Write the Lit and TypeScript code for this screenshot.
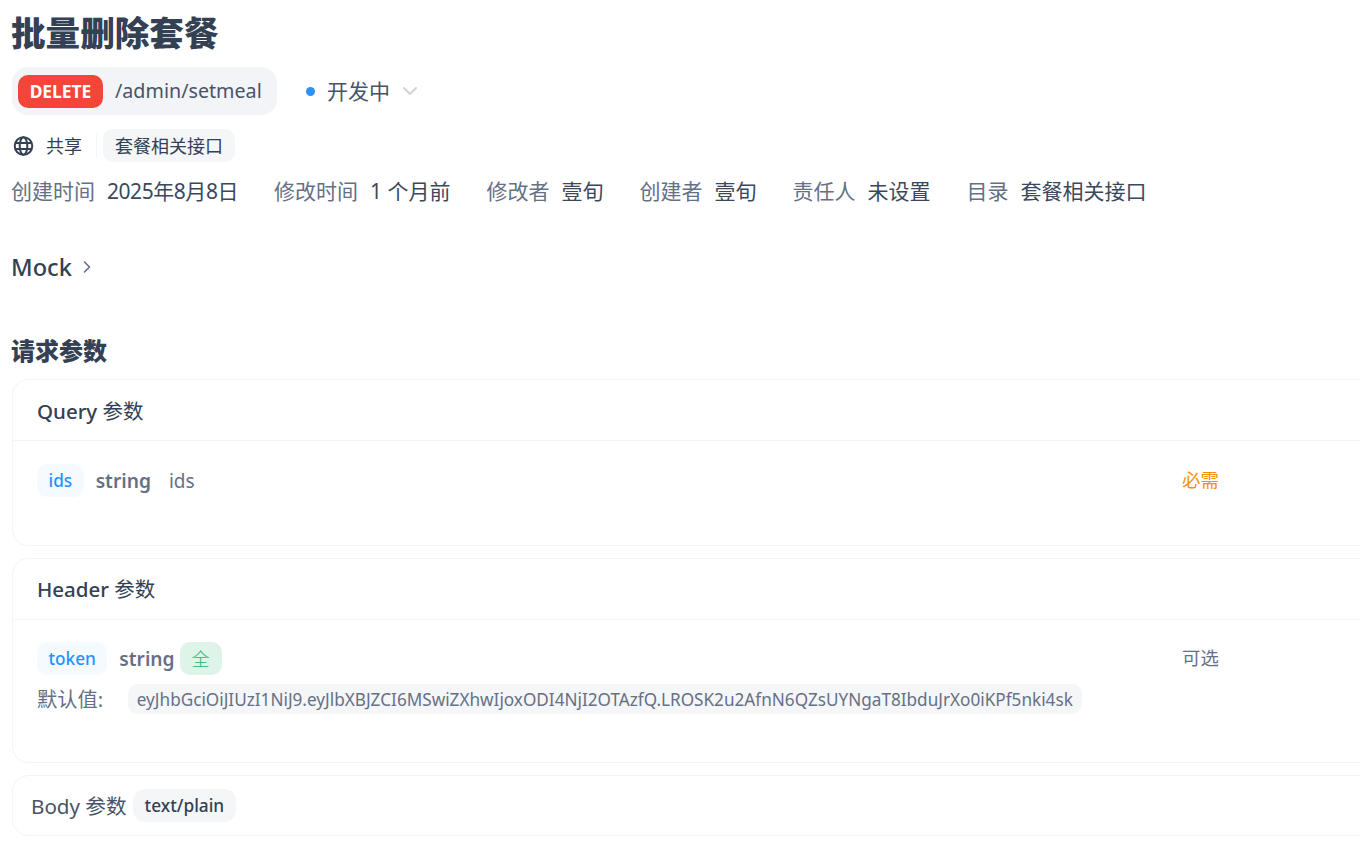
import { LitElement, html, css } from "lit";
import { customElement } from "lit/decorators.js";

@customElement("app-root")
export class AppRoot extends LitElement {
  static styles = css`
    :host {
      display: block;
      width: 1360px;
      height: 855px;
      overflow: hidden;
      background: #fff;
      color: #344054;
      font-family: "Noto Sans", "Noto Sans CJK SC", sans-serif;
      font-size: 20px;
      box-sizing: border-box;
      padding-left: 12px;
    }
    * { box-sizing: border-box; }
    .title { height: 67px; margin: 0 0 0 -1px; padding-top: 10px; font-size: 34.6px; line-height: 46px; font-weight: 800; color: #344054; white-space: nowrap; }
    .method-row { display: flex; align-items: center; height: 48px; }
    .pill { display: flex; align-items: center; height: 48px; width: 265px; padding-left: 6px; border-radius: 16px; background: #f2f4f8; }
    .badge { display: flex; align-items: center; justify-content: center; width: 85px; height: 33px; border-radius: 10px; background: #f44539; color: #fff; font-size: 17.4px; font-weight: 700; }
    .path { margin-left: 12px; font-size: 19.7px; line-height: 30px; color: #475467; white-space: nowrap; }
    .status { display: flex; align-items: center; margin-left: 29px; font-size: 21px; line-height: 30px; color: #475467; }
    .dot { width: 9px; height: 9px; border-radius: 50%; background: #2e90fa; margin-right: 12px; }
    .chev { margin-left: 12px; }
    .share-row { display: flex; align-items: center; height: 33px; margin-top: 14px; font-size: 18px; line-height: 26px; color: #344054; }
    .share-row svg { margin-left: 1px; }
    .share-label { margin-left: 12px; }
    .sep { width: 1px; height: 24px; background: #f2f4f7; margin: 0 6px 0 14px; }
    .tag { display: flex; align-items: center; height: 33px; padding: 0 12px; border-radius: 10px; background: #f5f6f8; }
    .meta { display: flex; align-items: center; height: 30px; margin: 14px 0 0 -1px; font-size: 21px; line-height: 30px; white-space: nowrap; }
    .meta-label { color: #667085; margin-right: 12px; }
    .meta-value { color: #3b485c; margin-right: 36px; }
    .date { letter-spacing: -0.45px; }
    .mock { display: flex; align-items: center; height: 32px; margin: 45px 0 0 -1px; font-size: 23.6px; line-height: 32px; font-weight: 500; }
    .mock svg { margin-left: 10px; }
    .section { height: 34px; margin: 51px 0 0 -1px; font-size: 24px; line-height: 34px; font-weight: 800; }
    .card { width: 1400px; border: 1px solid #f2f4f7; border-radius: 16px; background: #fff; }
    .c1 { height: 167px; margin-top: 11px; }
    .c1 .c-head { padding-top: 1px; }
    .c2 { height: 205px; margin-top: 12px; }
    .c2 .row { margin-top: 22px; }
    .c3 { height: 61px; margin-top: 12px; display: flex; align-items: center; padding-left: 18px; font-size: 20.6px; line-height: 30px; color: #475467; }
    .c-head { display: flex; align-items: center; height: 61px; padding-left: 24px; font-size: 20.5px; line-height: 30px; font-weight: 500; border-bottom: 1px solid #f2f4f7; white-space: pre; }
    .c-head span { font-weight: 400; }
    .row { position: relative; display: flex; align-items: center; height: 33px; margin-top: 23px; padding-left: 24px; line-height: 30px; }
    .name { display: flex; align-items: center; height: 33px; padding: 0 11.5px; border-radius: 10px; background: #f5faff; color: #1f93ff; font-size: 17.2px; font-weight: 500; }
    .type { margin-left: 12px; font-size: 19.2px; font-weight: 600; color: #667085; }
    .desc { margin-left: 18px; font-size: 19px; color: #667085; }
    .req, .opt { position: absolute; left: 1169px; margin-top: -2px; font-size: 18.4px; font-weight: 400; }
    .req { color: #f79009; }
    .opt { color: #667085; }
    .all { display: flex; align-items: center; justify-content: center; width: 42px; height: 33px; margin-left: 5px; border-radius: 10px; background: #def4e8; color: #1fb46c; font-size: 18px; font-weight: 300; }
    .defaults { display: flex; align-items: center; height: 30px; margin-top: 9px; padding-left: 24px; color: #667085; font-size: 20.3px; line-height: 30px; }
    .code { display: flex; align-items: center; height: 30px; margin-left: 24.5px; padding: 1px 9px 0; border-radius: 10px; background: #f5f6f8; font-size: 17.17px; white-space: nowrap; }
    .mime { display: flex; align-items: center; height: 33px; margin-left: 6px; padding: 0 12px; border-radius: 12px; background: #f5f6f8; color: #344054; font-size: 17.3px; font-weight: 500; }
  `;

  render() {
    return html`
      <h1 class="title">批量删除套餐</h1>
      <div class="method-row">
        <div class="pill"><span class="badge">DELETE</span><span class="path">/admin/setmeal</span></div>
        <div class="status">
          <span class="dot"></span>开发中
          <svg class="chev" width="16" height="10" viewBox="0 0 16 10" fill="none" stroke="#d0d5dd" stroke-width="2" stroke-linecap="round" stroke-linejoin="round"><path d="M2 2l6 6 6-6"/></svg>
        </div>
      </div>
      <div class="share-row">
        <svg width="21" height="22" viewBox="0 0 21 22" fill="none" stroke="#344054" stroke-width="2"><circle cx="10.5" cy="11" r="8.8"/><ellipse cx="10.5" cy="11" rx="3.8" ry="8.8"/><path d="M2.1 8h16.8M2.1 14h16.8"/></svg>
        <span class="share-label">共享</span>
        <span class="sep"></span>
        <span class="tag">套餐相关接口</span>
      </div>
      <div class="meta">
        <span class="meta-label">创建时间</span><span class="meta-value date">2025年8月8日</span>
        <span class="meta-label">修改时间</span><span class="meta-value">1 个月前</span>
        <span class="meta-label">修改者</span><span class="meta-value">壹旬</span>
        <span class="meta-label">创建者</span><span class="meta-value">壹旬</span>
        <span class="meta-label">责任人</span><span class="meta-value">未设置</span>
        <span class="meta-label">目录</span><span class="meta-value">套餐相关接口</span>
      </div>
      <div class="mock">Mock
        <svg width="10" height="14" viewBox="0 0 10 14" fill="none" stroke="#667085" stroke-width="1.6" stroke-linecap="round" stroke-linejoin="round"><path d="M2.5 2l5 5-5 5"/></svg>
      </div>
      <h2 class="section">请求参数</h2>
      <div class="card c1">
        <div class="c-head">Query <span>参数</span></div>
        <div class="row">
          <span class="name">ids</span><span class="type">string</span><span class="desc">ids</span>
          <span class="req">必需</span>
        </div>
      </div>
      <div class="card c2">
        <div class="c-head">Header <span>参数</span></div>
        <div class="row">
          <span class="name">token</span><span class="type">string</span><span class="all">全</span>
          <span class="opt">可选</span>
        </div>
        <div class="defaults">默认值:
          <span class="code">eyJhbGciOiJIUzI1NiJ9.eyJlbXBJZCI6MSwiZXhwIjoxODI4NjI2OTAzfQ.LROSK2u2AfnN6QZsUYNgaT8IbduJrXo0iKPf5nki4sk</span>
        </div>
      </div>
      <div class="card c3">Body 参数<span class="mime">text/plain</span></div>
    `;
  }
}
